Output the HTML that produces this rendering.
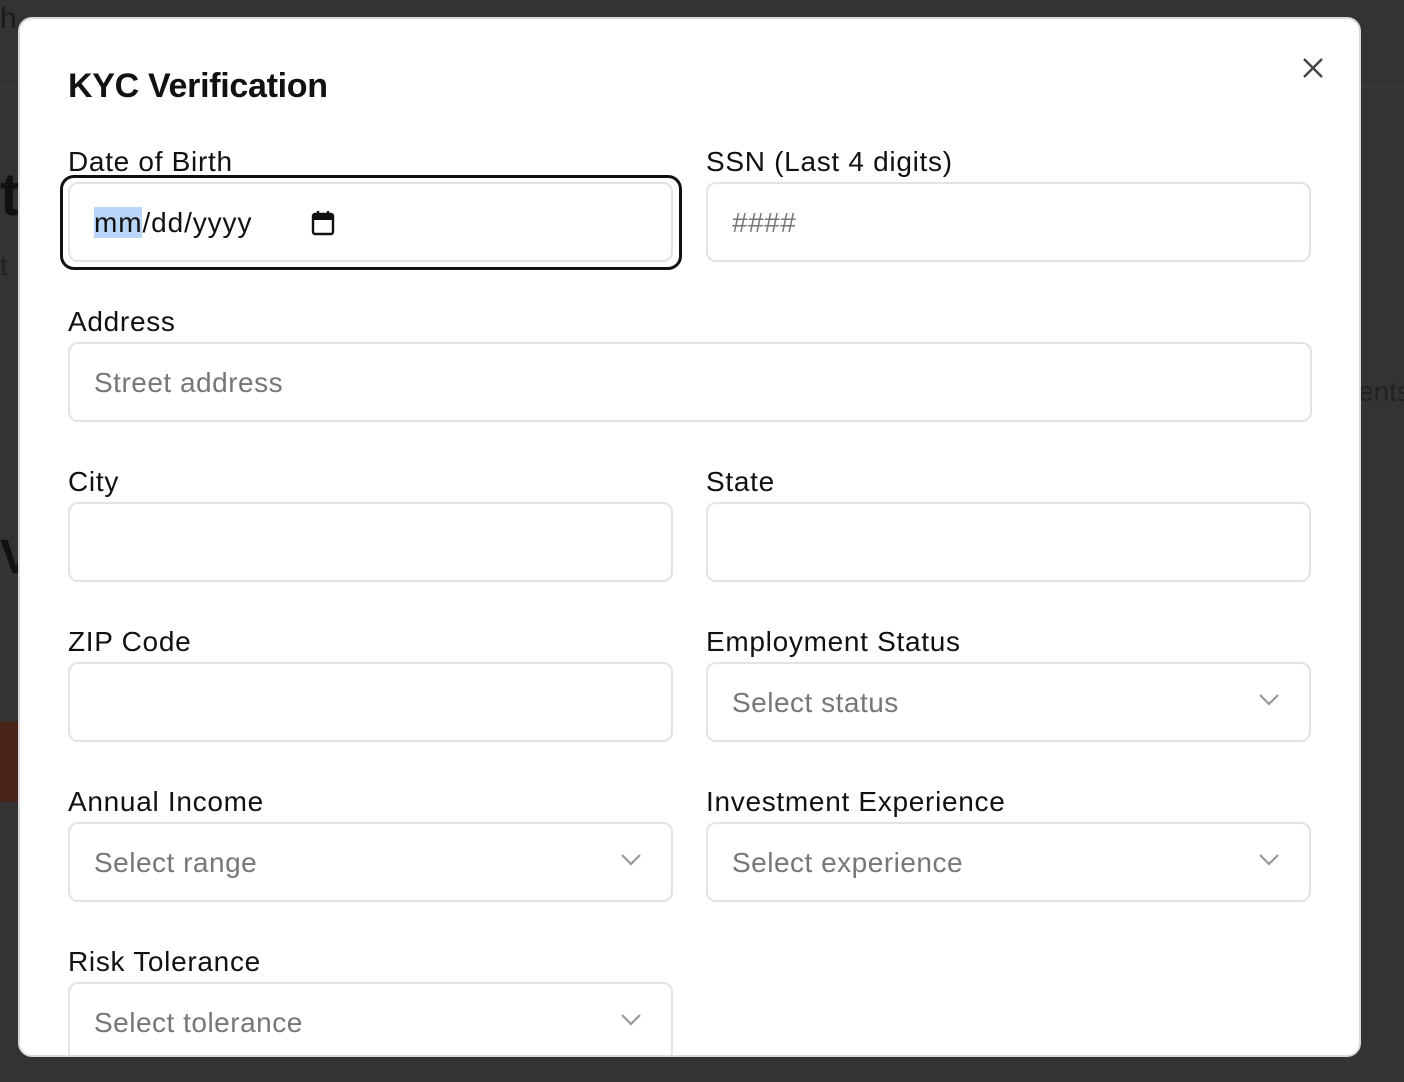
<!DOCTYPE html>
<html><head><meta charset="utf-8"><style>
*{box-sizing:border-box;margin:0;padding:0}
body{width:1404px;height:1082px;background:#333;font-family:"Liberation Sans",Arial,sans-serif;position:relative;overflow:hidden}
.bg{position:absolute;color:#1a1a1a}
.modal{position:absolute;left:18px;top:17px;width:1343px;height:1040px;background:#fff;border-radius:14px;border:2px solid #d9d9d9;overflow:hidden}
.t{position:absolute;left:48px;top:48px;font-size:34px;font-weight:bold;color:#111;letter-spacing:-0.3px}
.lbl{position:absolute;font-size:28px;color:#111;letter-spacing:0.7px}
.in{position:absolute;width:605px;height:80px;border:2px solid #e3e3e3;border-radius:10px;background:#fff}
.ph{position:absolute;left:24px;top:23px;font-size:28px;color:#777;letter-spacing:0.5px}
.chev{position:absolute;right:30px;top:30px}
</style></head><body>
<div class="bg" style="left:0;top:2px;font-size:30px">h</div>
<div class="bg" style="left:0;top:86px;width:1404px;height:1px;background:#3c3c3c"></div>
<div class="bg" style="left:0;top:160px;font-size:60px;font-weight:bold;color:#111">t</div>
<div class="bg" style="left:0;top:250px;font-size:28px;color:#222">t</div>
<div class="bg" style="left:0;top:530px;font-size:48px;font-weight:bold;color:#111">V</div>
<div class="bg" style="left:0;top:722px;width:20px;height:80px;background:#4a2416"></div>
<div class="bg" style="left:1358px;top:376px;font-size:28px;color:#222">ents</div>
<div class="modal">
<div class="t">KYC Verification</div>
<svg style="position:absolute;left:1282px;top:38px" width="22" height="22" viewBox="0 0 22 22"><path d="M2 2L20 20M20 2L2 20" stroke="#444" stroke-width="2.4"/></svg>

<div class="lbl" style="left:48px;top:127px">Date of Birth</div>
<div style="position:absolute;left:40px;top:156px;width:622px;height:95px;border:3.5px solid #111;border-radius:14px"></div>
<div class="in" style="left:48px;top:163px">
 <div class="ph" style="color:#111;left:24px;letter-spacing:0.9px"><span style="background:#b9d5f7">mm</span>/dd/yyyy</div>
 <svg style="position:absolute;left:241px;top:26px" width="24" height="26" viewBox="0 0 24 26"><rect x="2" y="4" width="20" height="20" rx="2" fill="none" stroke="#111" stroke-width="2.4"/><rect x="2" y="4" width="20" height="6" fill="#111"/><path d="M7 1v5M17 1v5" stroke="#111" stroke-width="2.4"/></svg>
</div>
<div class="lbl" style="left:686px;top:127px">SSN (Last 4 digits)</div>
<div class="in" style="left:686px;top:163px"><div class="ph">####</div></div>

<div class="lbl" style="left:48px;top:287px">Address</div>
<div class="in" style="left:48px;top:323px;width:1244px"><div class="ph">Street address</div></div>

<div class="lbl" style="left:48px;top:447px">City</div>
<div class="in" style="left:48px;top:483px"></div>
<div class="lbl" style="left:686px;top:447px">State</div>
<div class="in" style="left:686px;top:483px"></div>

<div class="lbl" style="left:48px;top:607px">ZIP Code</div>
<div class="in" style="left:48px;top:643px"></div>
<div class="lbl" style="left:686px;top:607px">Employment Status</div>
<div class="in" style="left:686px;top:643px"><div class="ph">Select status</div><svg class="chev" width="20" height="12" viewBox="0 0 20 12"><path d="M1 1l9 9 9-9" fill="none" stroke="#999" stroke-width="2.2"/></svg></div>

<div class="lbl" style="left:48px;top:767px">Annual Income</div>
<div class="in" style="left:48px;top:803px"><div class="ph">Select range</div><svg class="chev" width="20" height="12" viewBox="0 0 20 12"><path d="M1 1l9 9 9-9" fill="none" stroke="#999" stroke-width="2.2"/></svg></div>
<div class="lbl" style="left:686px;top:767px">Investment Experience</div>
<div class="in" style="left:686px;top:803px"><div class="ph">Select experience</div><svg class="chev" width="20" height="12" viewBox="0 0 20 12"><path d="M1 1l9 9 9-9" fill="none" stroke="#999" stroke-width="2.2"/></svg></div>

<div class="lbl" style="left:48px;top:927px">Risk Tolerance</div>
<div class="in" style="left:48px;top:963px"><div class="ph">Select tolerance</div><svg class="chev" width="20" height="12" viewBox="0 0 20 12"><path d="M1 1l9 9 9-9" fill="none" stroke="#999" stroke-width="2.2"/></svg></div>
</div>
</body></html>
